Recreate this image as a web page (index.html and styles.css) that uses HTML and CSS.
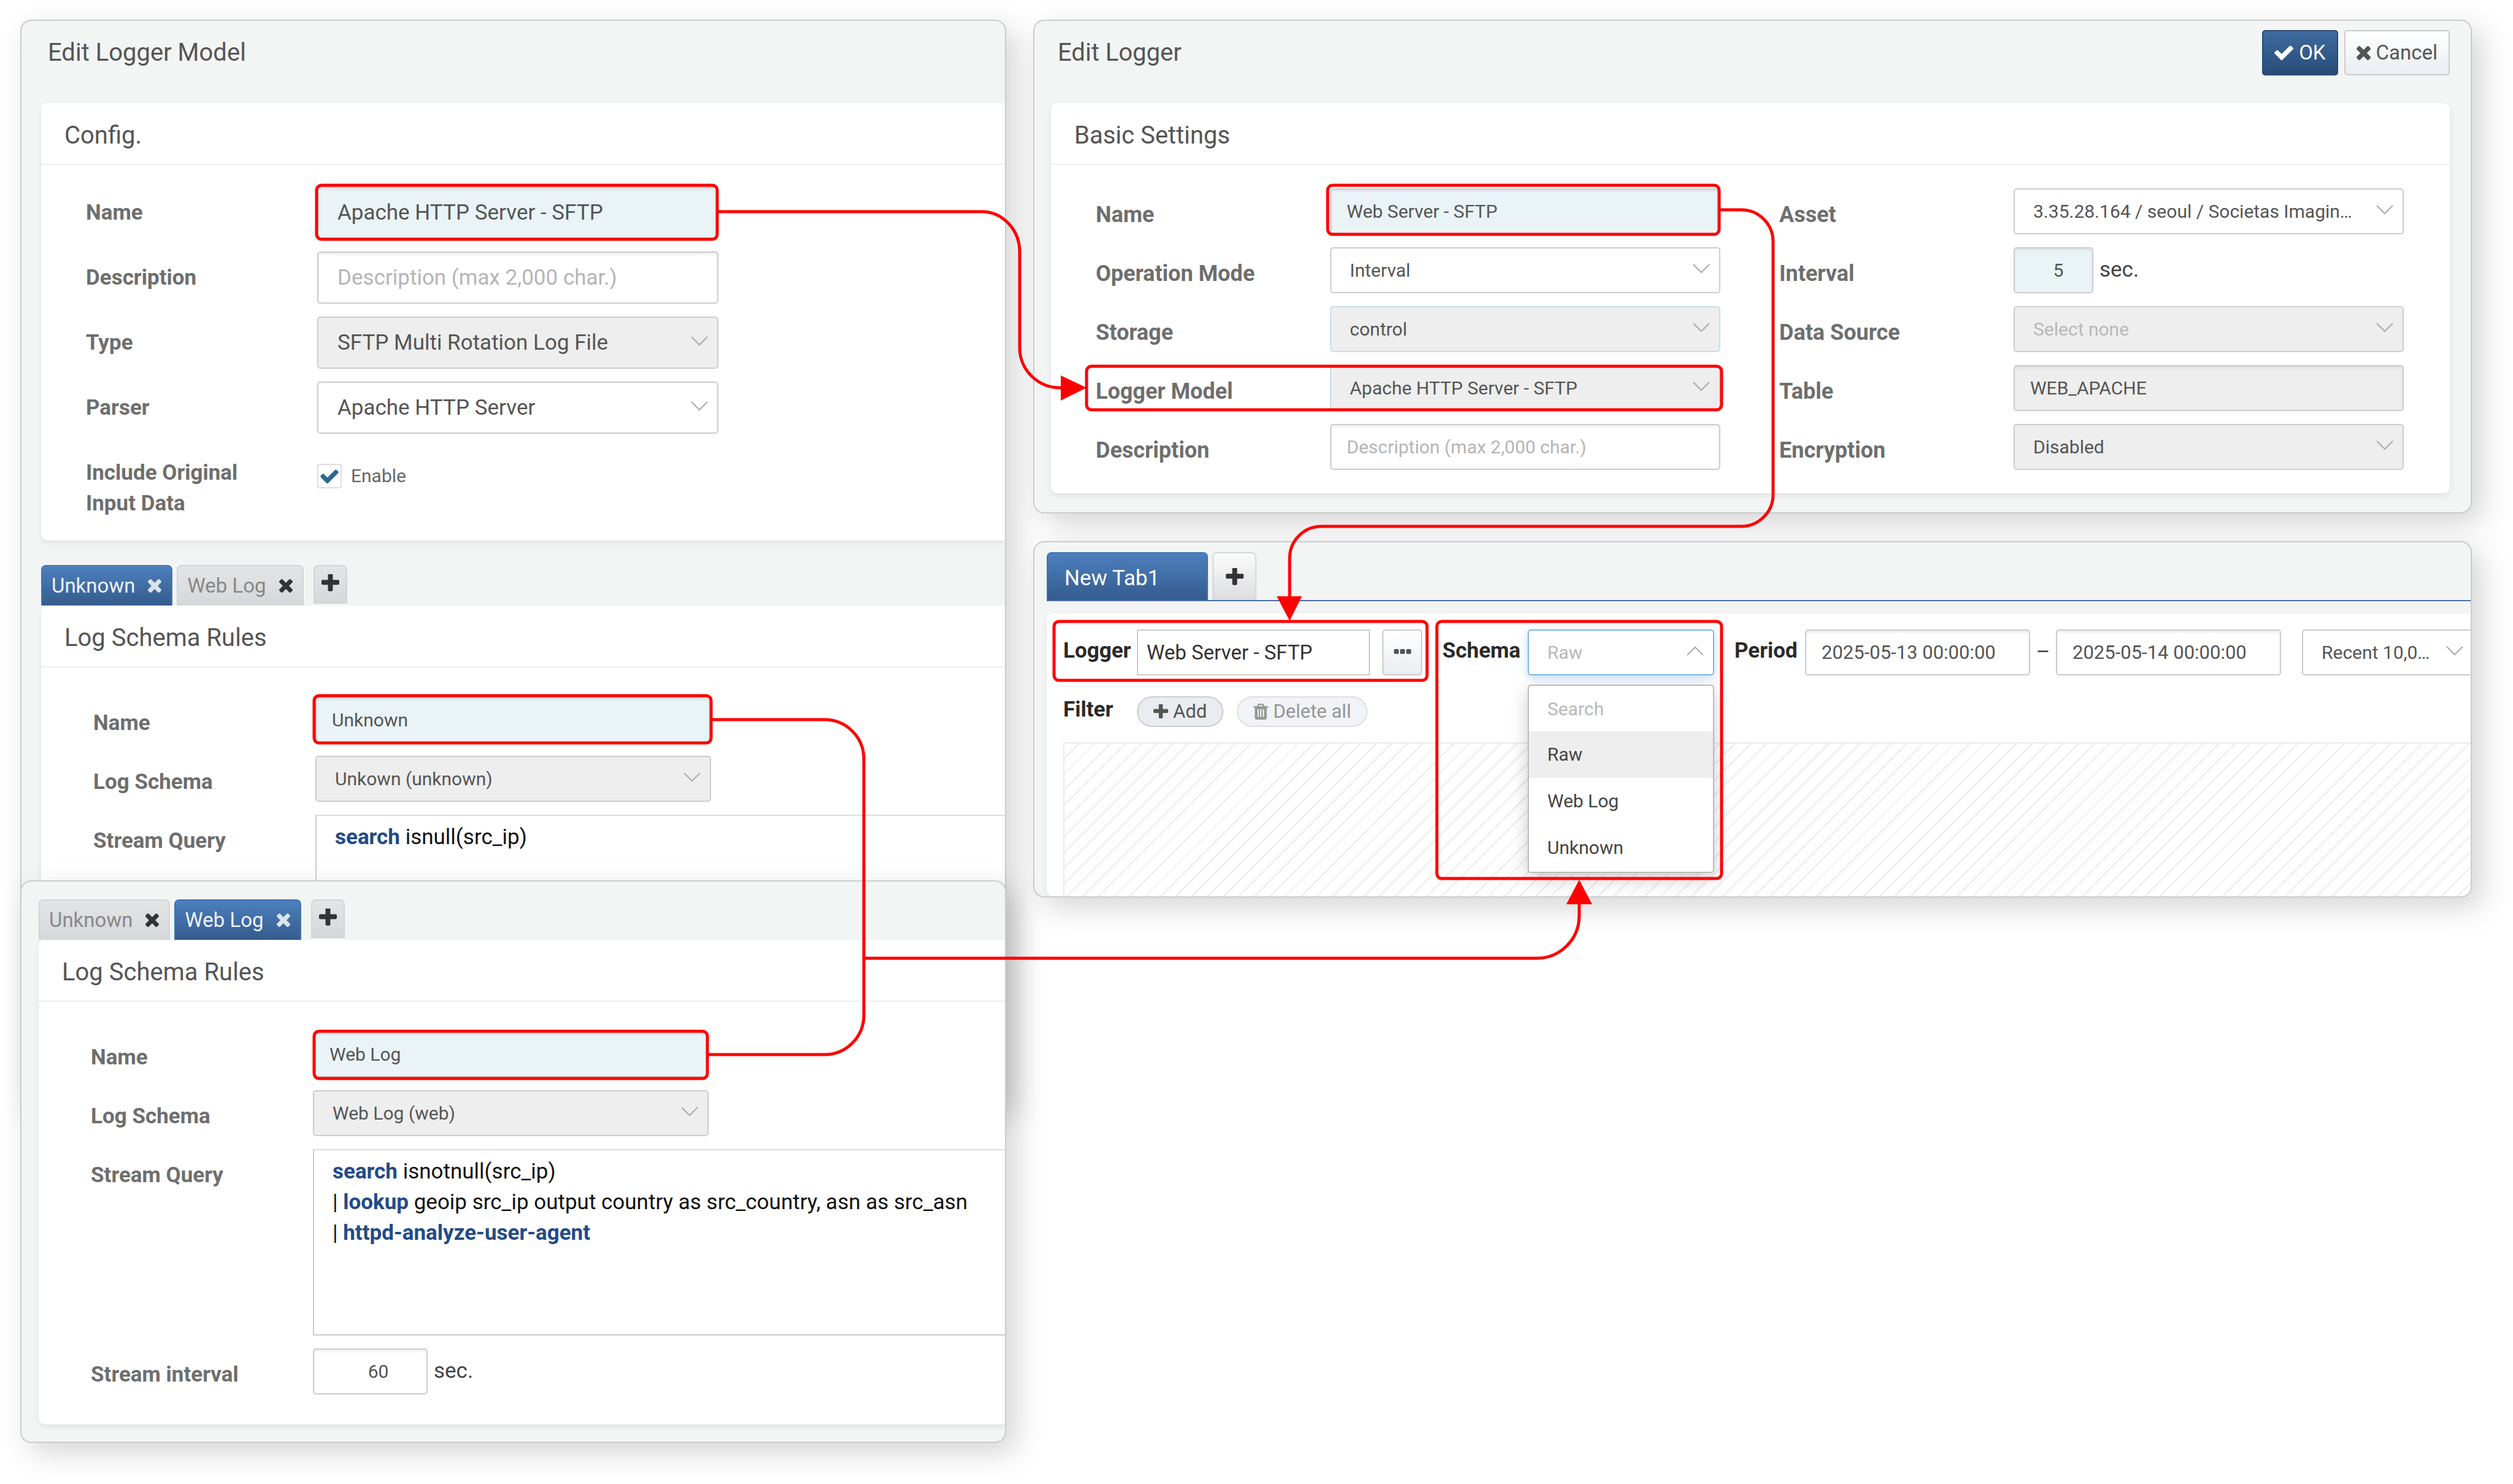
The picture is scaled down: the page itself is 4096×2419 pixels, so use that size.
FILE: index.html
```html
<!DOCTYPE html>
<html lang="en">
<head>
<meta charset="utf-8">
<title>Logger configuration</title>
<link rel="stylesheet" href="styles.css">
</head>
<body>
<svg class="sprite" aria-hidden="true">
  <symbol id="plus" viewBox="192 192 1408 1408"><path d="M1600 736v192q0 40-28 68t-68 28h-416v416q0 40-28 68t-68 28h-192q-40 0-68-28t-28-68v-416h-416q-40 0-68-28t-28-68v-192q0-40 28-68t68-28h416v-416q0-40 28-68t68-28h192q40 0 68 28t28 68v416h416q40 0 68 28t28 68z"/></symbol>
  <symbol id="times" viewBox="302 366 1188 1188"><path d="M1490 1322q0 40-28 68l-136 136q-28 28-68 28t-68-28l-294-294-294 294q-28 28-68 28t-68-28l-136-136q-28-28-28-68t28-68l294-294-294-294q-28-28-28-68t28-68l136-136q28-28 68-28t68 28l294 294 294-294q28-28 68-28t68 28l136 136q28 28 28 68t-28 68l-294 294 294 294q28 28 28 68z"/></symbol>
  <symbol id="check" viewBox="121 310 1550 1212"><path d="M1671 566q0 40-28 68l-724 724-136 136q-28 28-68 28t-68-28l-136-136-362-362q-28-28-28-68t28-68l136-136q28-28 68-28t68 28l294 295 656-657q28-28 68-28t68 28l136 136q28 28 28 68z"/></symbol>
  <symbol id="trash" viewBox="192 128 1408 1536"><path d="M704 1376v-704q0-14-9-23t-23-9h-64q-14 0-23 9t-9 23v704q0 14 9 23t23 9h64q14 0 23-9t9-23zm256 0v-704q0-14-9-23t-23-9h-64q-14 0-23 9t-9 23v704q0 14 9 23t23 9h64q14 0 23-9t9-23zm256 0v-704q0-14-9-23t-23-9h-64q-14 0-23 9t-9 23v704q0 14 9 23t23 9h64q14 0 23-9t9-23zm-544-992h448l-48-117q-7-9-17-11h-317q-10 2-17 11zm928 32v64q0 14-9 23t-23 9h-96v948q0 83-47 143.5t-113 60.5h-832q-66 0-113-58.5t-47-141.5v-952h-96q-14 0-23-9t-9-23v-64q0-14 9-23t23-9h309l70-167q15-37 54-63t79-26h320q40 0 79 26t54 63l70 167h309q14 0 23 9t9 23z"/></symbol>
  <symbol id="dots" viewBox="0 0 28 8"><rect width="8" height="8" rx="2"/><rect x="10" width="8" height="8" rx="2"/><rect x="20" width="8" height="8" rx="2"/></symbol>
  <symbol id="down" viewBox="0 0 28 16"><path d="M1 1l13 13L27 1" fill="none" stroke="currentColor" stroke-width="2"/></symbol>
  <symbol id="up" viewBox="0 0 28 16"><path d="M1 15L14 2l13 13" fill="none" stroke="currentColor" stroke-width="2"/></symbol>
</svg>

<main class="board">
  <div class="column column-model">
    <section class="panel panel-model">
      <header class="panel-head"><h1>Edit Logger Model</h1></header>
      <div class="card card-open">
        <h2 class="card-title">Config.</h2>
        <div class="form form-large">
          <div class="row"><label for="m-name">Name</label><input id="m-name" class="field required" value="Apache HTTP Server - SFTP"></div>
          <div class="row"><label for="m-desc">Description</label><input id="m-desc" class="field" placeholder="Description (max 2,000 char.)"></div>
          <div class="row"><label for="m-type">Type</label><div class="select"><select id="m-type" class="field" disabled><option>SFTP Multi Rotation Log File</option></select><svg class="chevron"><use href="#down"/></svg></div></div>
          <div class="row"><label for="m-parser">Parser</label><div class="select"><select id="m-parser" class="field"><option>Apache HTTP Server</option></select><svg class="chevron"><use href="#down"/></svg></div></div>
          <div class="row row-check"><span class="label">Include Original Input Data</span><label class="check"><span class="tick"><input type="checkbox" checked><svg><use href="#check"/></svg></span>Enable</label></div>
        </div>
      </div>
      <nav class="tabs">
        <button class="tab active">Unknown<svg><use href="#times"/></svg></button>
        <button class="tab">Web Log<svg><use href="#times"/></svg></button>
        <button class="tab-add" aria-label="Add rule"><svg><use href="#plus"/></svg></button>
      </nav>
      <div class="card card-open card-rules">
        <h2 class="card-title">Log Schema Rules</h2>
        <div class="form form-rules">
          <div class="row"><label for="u-name">Name</label><input id="u-name" class="field required" value="Unknown"></div>
          <div class="row"><label for="u-schema">Log Schema</label><div class="select"><select id="u-schema" class="field" disabled><option>Unkown (unknown)</option></select><svg class="chevron"><use href="#down"/></svg></div></div>
          <div class="row row-query"><span class="label" id="u-query">Stream Query</span><div class="editor" role="textbox" aria-labelledby="u-query" contenteditable="true" spellcheck="false"><b>search</b> isnull(src_ip)</div></div>
        </div>
      </div>
    </section>

    <section class="panel panel-rules">
      <nav class="tabs">
        <button class="tab">Unknown<svg><use href="#times"/></svg></button>
        <button class="tab active">Web Log<svg><use href="#times"/></svg></button>
        <button class="tab-add" aria-label="Add rule"><svg><use href="#plus"/></svg></button>
      </nav>
      <div class="card card-open">
        <h2 class="card-title">Log Schema Rules</h2>
        <div class="form form-rules">
          <div class="row"><label for="w-name">Name</label><input id="w-name" class="field required" value="Web Log"></div>
          <div class="row"><label for="w-schema">Log Schema</label><div class="select"><select id="w-schema" class="field" disabled><option>Web Log (web)</option></select><svg class="chevron"><use href="#down"/></svg></div></div>
          <div class="row row-query"><span class="label" id="w-query">Stream Query</span><div class="editor" role="textbox" aria-labelledby="w-query" contenteditable="true" spellcheck="false"><b>search</b> isnotnull(src_ip)<br>| <b>lookup</b> geoip src_ip output country as src_country, asn as src_asn<br>| <b>httpd-analyze-user-agent</b></div></div>
          <div class="row"><label for="w-int">Stream interval</label><input id="w-int" class="field number number-wide" value="60"><span class="unit">sec.</span></div>
        </div>
      </div>
    </section>
  </div>

  <div class="column column-logger">
    <section class="panel panel-logger">
      <header class="panel-head">
        <h1>Edit Logger</h1>
        <button class="btn btn-primary"><svg class="i-check"><use href="#check"/></svg>OK</button>
        <button class="btn"><svg class="i-times"><use href="#times"/></svg>Cancel</button>
      </header>
      <div class="card">
        <h2 class="card-title">Basic Settings</h2>
        <div class="form-pair">
          <div class="form">
            <div class="row"><label for="l-name">Name</label><input id="l-name" class="field required" value="Web Server - SFTP"></div>
            <div class="row"><label for="l-mode">Operation Mode</label><div class="select"><select id="l-mode" class="field"><option>Interval</option></select><svg class="chevron"><use href="#down"/></svg></div></div>
            <div class="row"><label for="l-store">Storage</label><div class="select"><select id="l-store" class="field locked" disabled><option>control</option></select><svg class="chevron"><use href="#down"/></svg></div></div>
            <div class="row"><label for="l-model">Logger Model</label><div class="select"><select id="l-model" class="field locked" disabled><option>Apache HTTP Server - SFTP</option></select><svg class="chevron"><use href="#down"/></svg></div></div>
            <div class="row"><label for="l-desc">Description</label><input id="l-desc" class="field" placeholder="Description (max 2,000 char.)"></div>
          </div>
          <div class="form">
            <div class="row"><label for="l-asset">Asset</label><div class="select"><select id="l-asset" class="field"><option>3.35.28.164 / seoul / Societas Imagin…</option></select><svg class="chevron"><use href="#down"/></svg></div></div>
            <div class="row"><label for="l-int">Interval</label><input id="l-int" class="field number required" value="5"><span class="unit">sec.</span></div>
            <div class="row"><label for="l-src">Data Source</label><div class="select"><select id="l-src" class="field empty" disabled><option>Select none</option></select><svg class="chevron"><use href="#down"/></svg></div></div>
            <div class="row"><label for="l-table">Table</label><input id="l-table" class="field" value="WEB_APACHE" disabled></div>
            <div class="row"><label for="l-enc">Encryption</label><div class="select"><select id="l-enc" class="field" disabled><option>Disabled</option></select><svg class="chevron"><use href="#down"/></svg></div></div>
          </div>
        </div>
      </div>
    </section>

    <section class="panel panel-search">
      <nav class="query-tabs">
        <button class="query-tab">New Tab1</button>
        <button class="query-add" aria-label="New tab"><svg><use href="#plus"/></svg></button>
      </nav>
      <div class="card card-open card-search">
        <div class="toolbar">
          <label class="caption caption-lead" for="s-logger">Logger</label>
          <input id="s-logger" class="field plain" value="Web Server - SFTP">
          <button class="btn btn-more" aria-label="Choose logger"><svg><use href="#dots"/></svg></button>
          <label class="caption caption-schema" for="s-schema">Schema</label>
          <div class="select schema">
            <select id="s-schema" class="field empty focused"><option>Raw</option></select><svg class="chevron"><use href="#up"/></svg>
            <div class="menu">
              <input class="menu-search" placeholder="Search" aria-label="Search">
              <button class="menu-item current">Raw</button>
              <button class="menu-item">Web Log</button>
              <button class="menu-item">Unknown</button>
            </div>
          </div>
          <label class="caption caption-period" for="s-from">Period</label>
          <input id="s-from" class="field date" value="2025-05-13 00:00:00">
          <span class="dash">–</span>
          <input class="field date" aria-label="To" value="2025-05-14 00:00:00">
          <div class="select recent"><select class="field" aria-label="Limit"><option>Recent 10,0…</option></select><svg class="chevron"><use href="#down"/></svg></div>
        </div>
        <div class="filters">
          <span class="caption caption-lead">Filter</span>
          <button class="pill"><svg class="i-plus"><use href="#plus"/></svg>Add</button>
          <button class="pill pill-off" disabled><svg class="i-trash"><use href="#trash"/></svg>Delete all</button>
        </div>
        <div class="drop-area"></div>
      </div>
    </section>
  </div>
</main>

<svg class="notes" viewBox="0 0 4096 2419" aria-hidden="true">
  <g class="note-line">
    <rect x="516" y="302" width="653" height="88" rx="8"/>
    <rect x="512" y="1134" width="647" height="77" rx="8"/>
    <rect x="512" y="1681" width="641" height="77" rx="8"/>
    <rect x="2164" y="302" width="638" height="80" rx="8"/>
    <rect x="1771" y="597" width="1035" height="71" rx="8"/>
    <rect x="1718" y="1013" width="608" height="96" rx="8"/>
    <rect x="2342" y="1013" width="464" height="419" rx="8"/>
    <path d="M1171 345H1600A62 66 0 0 1 1662 411V567A66 65 0 0 0 1731 632"/>
    <path d="M2804 342H2838A52 52 0 0 1 2890 394V806A52 52 0 0 1 2838 858H2154A52 52 0 0 0 2102 910V974"/>
    <path d="M1161 1173H1344A64 64 0 0 1 1408 1237V1655A64 64 0 0 1 1344 1719H1155"/>
    <path d="M1408 1562H2505A69 69 0 0 0 2574 1493V1472"/>
  </g>
  <g class="note-head">
    <path d="M1729 612v41l42-21z"/>
    <path d="M2081 972h41l-20 40z"/>
    <path d="M2553 1474h42l-21-40z"/>
  </g>
</svg>
</body>
</html>
```
FILE: styles.css
```css
* { box-sizing: border-box; }

body {
  margin: 0;
  position: relative;
  background: #fff;
  color: #555;
  font: 30px/50px Roboto, "Liberation Sans", sans-serif;
  overflow-x: hidden;
}

h1, h2 { margin: 0; font-size: 40px; line-height: 50px; font-weight: 400; color: #555; }
button, input, select { font: inherit; color: inherit; margin: 0; }
svg { display: block; fill: currentColor; }
.sprite { display: none; }

.board {
  display: grid;
  grid-template-columns: minmax(0, 1607fr) minmax(0, 2345fr);
  column-gap: 44px;
  align-items: start;
  padding: 32px 67px 67px 33px;
}
.column { display: flex; flex-direction: column; }
.column-logger { gap: 45px; }

/* Panels */
.panel {
  background: #f3f5f5;
  border: 2px solid #ccc;
  border-radius: 18px;
  box-shadow: 16px 16px 48px rgba(0, 0, 0, .17);
  overflow: hidden;
}
.panel-model { padding: 0 0 28px 32px; }
.panel-rules { padding: 29px 0 28px 28px; margin-top: -368px; position: relative; }
.panel-logger { padding: 0 34px 31px 27px; }
.panel-search { padding: 16px 0 0 20px; }

.panel-head {
  display: flex;
  align-items: center;
  gap: 10px;
  min-height: 134px;
  padding: 15px 0 45px 11px;
}
.panel-head h1 { flex: 1; }

/* Cards */
.card {
  background: #fff;
  border-radius: 10px;
  box-shadow: 0 4px 8px rgba(0, 0, 0, .08);
}
.card-open { border-radius: 10px 0 0 10px; }
.card-title { padding: 28px 38px 21px; border-bottom: 2px solid #eee; }
.card-rules { padding-bottom: 141px; }

/* Forms */
.form { display: flex; flex-direction: column; gap: 21px; }
.form-large { padding: 35px 0 35px 73px; font-size: 35px; }
.form-rules { padding: 48px 0 49px 85px; }
.card-rules .form-rules { padding-bottom: 0; }
.form-pair {
  display: grid;
  grid-template-columns: 1fr 1fr;
  column-gap: 96px;
  padding: 38px 75px 38px 73px;
}
.row { display: flex; align-items: flex-start; }
.row > label:first-child, .label {
  flex: none;
  width: 382px;
  padding-top: 18px;
  font-size: 35px;
  font-weight: 700;
  color: #6e6e6e;
}
.form-pair .row > label:first-child { font-size: 36px; }
.form-large .row > label:first-child, .form-large .label { width: 377px; }
.form-rules .row > label:first-child, .form-rules .label { width: 362px; }
.form-pair .row > .field:not(.number), .form-pair .select { flex: 1; }
.form-large .row > .field, .form-large .select { width: 654px; }
.form-rules .row > .field:not(.number), .form-rules .select { width: 645px; }
.form-large .label { padding-right: 80px; }

.field {
  width: 100%;
  height: 75px;
  padding: 0 25px;
  border: 2px solid #ccc;
  border-radius: 5px;
  background: #fff;
  color: #555;
  outline: 0;
  appearance: none;
  opacity: 1;
}
input.field { box-shadow: inset 0 3px 4px rgba(0, 0, 0, .07); }
.field::placeholder { color: #b5b5b5; opacity: 1; }
select.field { padding: 0 60px 0 30px; }
.form-large .field { height: 85px; padding-left: 31px; }
.field.required { background: #eaf4f7; }
.field:disabled { background: #eee; }
.field.locked { border-color: #c8dfe6; }
.field.empty { color: #b8b8b8; }
.number { width: 130px; padding: 0 0 0 16px; text-align: center; }
.number-wide { width: 187px; padding-left: 26px; }
.unit { padding: 12px 0 0 10px; font-size: 35px; color: #444; }

.select { display: grid; align-items: center; }
.select > select, .select > .chevron { grid-area: 1 / 1; }
.chevron {
  justify-self: end;
  width: 28px;
  height: 16px;
  margin: 0 17px 5px 0;
  color: #aaa;
  pointer-events: none;
}

.check {
  display: flex;
  align-items: center;
  gap: 15px;
  height: 40px;
  margin-top: 28px;
  font-size: 30px;
  color: #666;
}
.tick { display: grid; place-items: center; }
.tick input {
  grid-area: 1 / 1;
  width: 40px;
  height: 40px;
  border: 2px solid #ddd;
  border-radius: 3px;
  background: #fff;
  appearance: none;
}
.tick svg { grid-area: 1 / 1; width: 30px; height: 23px; color: #2b6a8e; }

.editor {
  flex: 1;
  height: 304px;
  padding: 10px 0 0 30px;
  border: 2px solid #ccc;
  border-top-color: #ddd;
  border-right: 0;
  background: #fff;
  font-size: 35px;
  color: #111;
  outline: 0;
}
.editor b { color: #234b88; }

/* Rule tabs */
.tabs { display: flex; align-items: flex-start; gap: 7px; height: 66px; }
.panel-model .tabs { margin-top: 40px; }
.tab {
  display: flex;
  align-items: center;
  gap: 21px;
  height: 66px;
  padding: 0 16px 0 15px;
  border: 2px solid #d3d4d6;
  border-bottom: 0;
  border-radius: 8px 8px 0 0;
  background: linear-gradient(#e4e5e6, #d6d7da);
  font-size: 33px;
  color: #888;
}
.tab svg { width: 22px; height: 22px; color: #333; }
.tab.active { border-color: #4474ae; background: linear-gradient(#4d80be, #345b8d); color: #eef2f7; }
.tab.active svg { color: #dde2e8; }
.tab-add {
  display: grid;
  place-items: center;
  width: 55px;
  height: 63px;
  margin-left: 9px;
  padding: 0 0 4px;
  border: 2px solid #d3d4d6;
  border-radius: 8px 8px 0 0;
  background: linear-gradient(#e4e5e6, #d6d7da);
  color: #333;
}
.tab-add svg, .query-add svg { width: 29px; height: 29px; }

/* Buttons */
.btn {
  display: flex;
  align-items: center;
  gap: 9px;
  height: 74px;
  padding: 0 18px;
  border: 2px solid #ccc;
  border-radius: 5px;
  background: linear-gradient(#fff, #e9edf1);
  font-size: 33px;
  color: #555;
}
.btn-primary { border-color: #264a75; background: linear-gradient(#3f6b9f, #284c76); color: #fff; }
.i-check { width: 31px; height: 24px; }
.i-times { width: 23px; height: 23px; }
.i-plus { width: 24px; height: 24px; }
.i-trash { width: 24px; height: 26px; }

/* Search panel */
.query-tabs { display: flex; gap: 7px; height: 80px; border-bottom: 2px solid #4a6fa3; }
.query-tab {
  width: 263px;
  height: 78px;
  padding: 5px 0 0 27px;
  border: 2px solid #4474ae;
  border-bottom: 0;
  border-radius: 8px 8px 0 0;
  background: linear-gradient(#4d80be, #345b8d);
  font-size: 35px;
  text-align: left;
  color: #fff;
}
.query-add {
  display: grid;
  place-items: center;
  width: 72px;
  height: 78px;
  padding: 0;
  border: 2px solid #d8d8d8;
  border-bottom: 0;
  border-radius: 8px 8px 0 0;
  background: linear-gradient(#fbfbfb, #dcdddf);
  color: #333;
}
.card-search { margin-top: 20px; padding: 26px 0 0 27px; }
.toolbar { display: flex; height: 75px; }
.toolbar > *, .filters > * { flex: none; }
.caption { font-size: 35px; font-weight: 700; color: #2a2a2a; }
.toolbar .caption { padding-top: 10px; }
.caption-lead { width: 120px; }
.caption-schema { width: 139px; margin-left: 33px; }
.caption-period { width: 115px; margin-left: 33px; }
.plain { width: 380px; padding: 0 14px; border-radius: 0; font-size: 33px; color: #333; }
input.plain { box-shadow: none; }
.btn-more { width: 65px; height: 75px; margin-left: 20px; padding: 0; justify-content: center; }
.btn-more svg { width: 28px; height: 8px; margin-bottom: 4px; }
.schema { position: relative; width: 304px; }
.field.focused { border-color: #7fb6e6; box-shadow: 0 4px 16px rgba(90, 160, 230, .35); }
.date { width: 367px; font-size: 31px; }
.dash { width: 42px; padding-top: 12px; text-align: center; color: #444; font-size: 35px; }
.recent { width: 280px; margin-left: 34px; }

.menu {
  position: absolute;
  top: 90px;
  left: 0;
  width: 304px;
  padding-bottom: 1px;
  border: 2px solid #bbb;
  border-radius: 5px;
  background: #fff;
  box-shadow: 0 10px 30px rgba(0, 0, 0, .2);
  display: flex;
  flex-direction: column;
  z-index: 1;
}
.menu-search, .menu-item {
  height: 76px;
  padding: 0 30px;
  border: 0;
  background: none;
  text-align: left;
  color: #444;
  outline: 0;
}
.menu-search { width: 100%; height: 74px; }
.menu-search::placeholder { color: #b8b8b8; opacity: 1; }
.menu-item.current { background: #eee; }

.filters { display: flex; align-items: center; margin-top: 34px; height: 50px; }
.filters .caption { padding-bottom: 6px; }
.pill {
  display: flex;
  align-items: center;
  gap: 8px;
  height: 50px;
  margin-right: 22px;
  padding: 0 25px;
  border: 2px solid #ccc;
  border-radius: 25px;
  background: #e9edf1;
  font-size: 31px;
  color: #555;
}
.pill-off { opacity: .62; }
.drop-area {
  height: 251px;
  margin-top: 25px;
  border: 2px solid #eaeaea;
  border-width: 2px 0 0 2px;
  background: repeating-linear-gradient(135deg, #fff 0 16px, #ececec 16px 18px);
}

/* Callout lines drawn over the panels */
.notes { position: absolute; top: 0; left: 0; width: 100%; height: auto; pointer-events: none; z-index: 2; }
.note-line { fill: none; stroke: #f00; stroke-width: 5; }
.note-head { fill: #f00; }
```
